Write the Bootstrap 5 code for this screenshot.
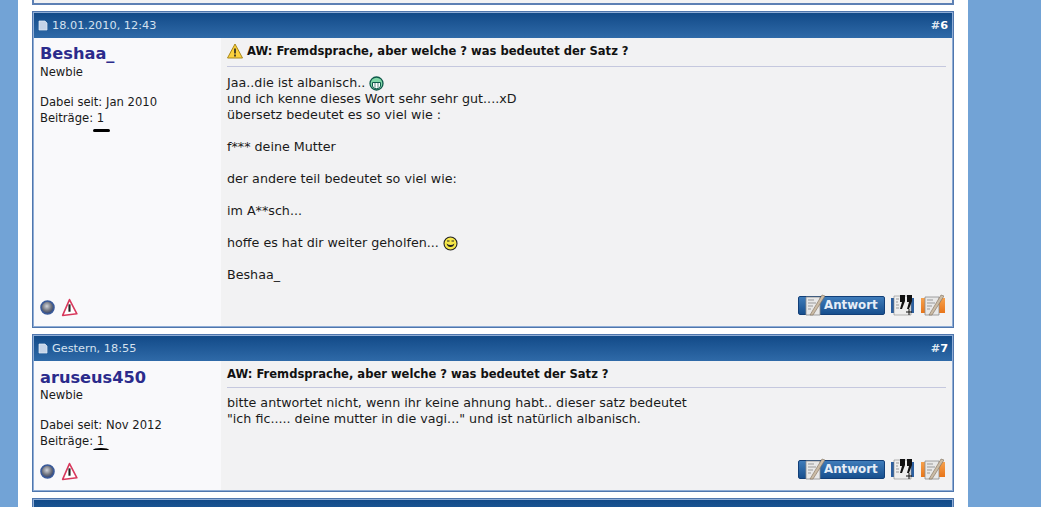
<!DOCTYPE html>
<html lang="de">
<head>
    <meta charset="UTF-8">
    <meta name="viewport" content="width=device-width, initial-scale=1.0">
    <title>Fremdsprache</title>
    <link rel="stylesheet" href="https://cdn.jsdelivr.net/npm/bootstrap@5.3.2/dist/css/bootstrap.min.css">
    <style>
        html, body { height: 507px; overflow: hidden; }
        body {
            background-color: #72a3d6;
            font-family: "DejaVu Sans", Verdana, sans-serif;
            font-size: 11.6px;
            line-height: 16px;
            color: #1a1a1a;
        }
        .page-wrap {
            width: 950px;
            height: 507px;
            margin-left: 18px;
            padding: 0 14px;
            background-color: #fff;
            overflow: hidden;
        }
        .post-stub {
            height: 5px;
            border: 2px solid #5d80b4;
            border-top: 0;
            background-color: #f2f2f3;
            margin-bottom: 6px;
        }
        .post-box {
            border: 1px solid #4f76ad;
            outline: 1px solid #8fadd6;
            outline-offset: -2px;
            margin-bottom: 6px;
        }
        .post-head {
            height: 25px;
            padding: 0 4px;
            margin: 1px 1px 0;
            background: linear-gradient(#124a88, #2f6aa8);
            color: #d5e2f0;
            font-size: 11.3px;
        }
        .post-no { color: #dfe8f2; font-weight: 700; }
        .post-no b { color: #fff; }
        .post-main { margin: 0 1px 1px; }
        .first .post-main { height: 288px; }
        .second .post-main { height: 129px; }
        .post-user {
            width: 187px;
            padding: 5px 7px 9px 6px;
            background-color: #f9f9fb;
        }
        .user-name {
            font-size: 16.2px;
            line-height: 21px;
            font-weight: 700;
            color: #2b2b8c;
        }
        .second .user-name { padding-top: 1px; }
        .second .user-rank { margin-top: -1px; }
        .user-rank { margin-bottom: 14px; }
        .post-count { position: relative; }
        .post-count::after {
            content: "";
            position: absolute;
            left: 53px;
            top: 19px;
            width: 17px;
            height: 3px;
            background-color: #000;
            border-radius: 2px;
        }
        .second .post-count::after {
            top: 15px;
            left: 53px;
            width: 16px;
            height: 4px;
            background-color: transparent;
            border-top: 2px solid #000;
            border-radius: 50% 50% 0 0;
        }
        .user-icons { gap: 6px; }
        .post-body {
            background-color: #f2f2f3;
            padding: 5px 6px 10px 6px;
        }
        .post-title {
            font-weight: 700;
            color: #111;
            font-size: 11.55px;
            border-bottom: 1px solid #c5c8de;
            margin-bottom: 7px;
        }
        .first .post-title { height: 24px; margin-bottom: 8px; }
        .second .post-title { height: 22px; }
        .post-text { font-size: 12.7px; }
        .smile { vertical-align: -4px; }
        .post-actions { gap: 5px; }
        .action-btn {
            position: relative;
            display: block;
            width: 87px;
            height: 19px;
            padding-left: 25px;
            font-size: 11.8px;
            line-height: 17px;
            font-weight: 700;
            color: #e6eef7;
            background: linear-gradient(#3f7cba, #174f8e);
            border: 1px solid #123f78;
            border-radius: 2px;
        }
        .action-btn svg {
            position: absolute;
            left: 6px;
            top: -3px;
        }
    </style>
</head>
<body>
    <svg width="0" height="0" class="d-block">
        <defs>
            <radialGradient id="dot-fill" cx=".45" cy=".4" r=".6">
                <stop offset="0" stop-color="#d2d4da"/>
                <stop offset=".6" stop-color="#6d717c"/>
                <stop offset="1" stop-color="#2c3f70"/>
            </radialGradient>
            <linearGradient id="orange-fill" x1="0" y1="0" x2="0" y2="1">
                <stop offset="0" stop-color="#f6a24e"/>
                <stop offset="1" stop-color="#e8751a"/>
            </linearGradient>
            <symbol id="ic-doc" viewBox="0 0 10 11">
                <path d="M1 1h6l2 2v7H1z" fill="#c4d3e8" stroke="#e4ecf6" stroke-width=".7"/>
            </symbol>
            <symbol id="ic-sheet" viewBox="0 0 20 22">
                <path d="M1 3h14v18H1z" fill="#e8e8e8" stroke="#8a8a8a" stroke-width=".8"/>
                <path d="M3 6h6M3 9h8M3 12h5M3 15h3" stroke="#999" stroke-width="1"/>
                <path d="M5 21 17 1l3 1L8 21z" fill="#cbbca6" stroke="#7f6f5c" stroke-width=".6"/>
            </symbol>
            <symbol id="ic-dot" viewBox="0 0 15 15">
                <circle cx="7.5" cy="7.5" r="6.5" fill="url(#dot-fill)" stroke="#3a5a9a" stroke-width="1.6"/>
            </symbol>
            <symbol id="ic-warn" viewBox="0 0 16 18">
                <path d="M8 1.5 15 15 1.5 16.5z" fill="#fff" stroke="#d8385c" stroke-width="1.5" stroke-linejoin="round"/>
                <path d="M8 6v7" stroke="#222" stroke-width="2"/>
            </symbol>
            <symbol id="ic-quote" viewBox="0 0 25 22">
                <path d="M1 4h23v15H1z" fill="#2c5f9f"/>
                <path d="M4 2h17v19H4z" fill="#eee" stroke="#888" stroke-width=".6"/>
                <path d="M6 5h3M6 8h2M6 11h3M6 14h3" stroke="#999"/>
                <path d="M10 1h5v6l-3 8h-2l2-7h-2zM17 1h5v6l-3 8h-2l2-7h-2z" fill="#111"/>
                <path d="M19 15v6M16 18h6" stroke="#111"/>
            </symbol>
            <symbol id="ic-edit" viewBox="0 0 26 22">
                <path d="M1 4h24v15H1z" fill="url(#orange-fill)"/>
                <use href="#ic-sheet" x="4" width="20" height="22"/>
            </symbol>
        </defs>
    </svg>
    <div class="page-wrap">
        <div class="post-stub"></div>

        <div class="post-box first">
            <div class="post-head d-flex align-items-center justify-content-between">
                <span class="d-flex align-items-center gap-1"><svg width="10" height="11"><use href="#ic-doc"/></svg>18.01.2010, 12:43</span>
                <span class="post-no">#<b>6</b></span>
            </div>
            <div class="post-main d-flex">
                <div class="post-user d-flex flex-column">
                    <div class="user-name">Beshaa_</div>
                    <div class="user-rank">Newbie</div>
                    <div>Dabei seit: Jan 2010</div>
                    <div class="post-count">Beiträge: 1</div>
                    <div class="user-icons mt-auto d-flex align-items-center">
                        <svg width="15" height="15"><use href="#ic-dot"/></svg>
                        <svg width="17" height="19"><use href="#ic-warn"/></svg>
                    </div>
                </div>
                <div class="post-body flex-grow-1 d-flex flex-column">
                    <div class="post-title d-flex gap-1">
                        <svg width="16" height="16" viewBox="0 0 16 16" class="flex-shrink-0"><path d="M8 1 15.5 15H.5z" fill="#fbd13c" stroke="#a8871c" stroke-linejoin="round"/><path d="M8 5.5v5M8 11.5v2" stroke="#222" stroke-width="1.6"/></svg>
                        <span>AW: Fremdsprache, aber welche ? was bedeutet der Satz ?</span>
                    </div>
                    <div class="post-text">
                        Jaa..die ist albanisch..
                        <svg class="smile" width="15" height="15" viewBox="0 0 15 15"><circle cx="7.5" cy="7.5" r="6.5" fill="#7fd6a6" stroke="#0f5a4a" stroke-width="1.3"/><path d="M3.5 6.5h8v3.5a3 2 0 0 1-8 0z" fill="#fff" stroke="#0f5a4a"/><path d="M6 6.5v5M9 6.5v5" stroke="#0f5a4a" stroke-width=".7"/></svg><br>
                        und ich kenne dieses Wort sehr sehr gut....xD<br>
                        übersetz bedeutet es so viel wie :<br><br>
                        f*** deine Mutter<br><br>
                        der andere teil bedeutet so viel wie:<br><br>
                        im A**sch...<br><br>
                        hoffe es hat dir weiter geholfen...
                        <svg class="smile" width="15" height="15" viewBox="0 0 15 15"><circle cx="7.5" cy="7.5" r="6.5" fill="#f6e84a" stroke="#222" stroke-width="1.1"/><path d="M3.5 7.5q4 3 8 0-1 3.5-4 3.5t-4-3.5z" fill="#222"/><path d="M4 5h2.5M8.5 5H11" stroke="#222"/></svg><br><br>
                        Beshaa_
                    </div>
                    <div class="post-actions mt-auto d-flex justify-content-end align-items-center">
                        <span class="action-btn"><svg width="20" height="22"><use href="#ic-sheet"/></svg>Antwort</span>
                        <svg width="25" height="22"><use href="#ic-quote"/></svg>
                        <svg width="26" height="22"><use href="#ic-edit"/></svg>
                    </div>
                </div>
            </div>
        </div>

        <div class="post-box second">
            <div class="post-head d-flex align-items-center justify-content-between">
                <span class="d-flex align-items-center gap-1"><svg width="10" height="11"><use href="#ic-doc"/></svg>Gestern, 18:55</span>
                <span class="post-no">#<b>7</b></span>
            </div>
            <div class="post-main d-flex">
                <div class="post-user d-flex flex-column">
                    <div class="user-name">aruseus450</div>
                    <div class="user-rank">Newbie</div>
                    <div>Dabei seit: Nov 2012</div>
                    <div class="post-count">Beiträge: 1</div>
                    <div class="user-icons mt-auto d-flex align-items-center">
                        <svg width="15" height="15"><use href="#ic-dot"/></svg>
                        <svg width="17" height="19"><use href="#ic-warn"/></svg>
                    </div>
                </div>
                <div class="post-body flex-grow-1 d-flex flex-column">
                    <div class="post-title">AW: Fremdsprache, aber welche ? was bedeutet der Satz ?</div>
                    <div class="post-text">
                        bitte antwortet nicht, wenn ihr keine ahnung habt.. dieser satz bedeutet<br>
                        "ich fic..... deine mutter in die vagi..." und ist natürlich albanisch.
                    </div>
                    <div class="post-actions mt-auto d-flex justify-content-end align-items-center">
                        <span class="action-btn"><svg width="20" height="22"><use href="#ic-sheet"/></svg>Antwort</span>
                        <svg width="25" height="22"><use href="#ic-quote"/></svg>
                        <svg width="26" height="22"><use href="#ic-edit"/></svg>
                    </div>
                </div>
            </div>
        </div>

        <div class="post-box">
            <div class="post-head"></div>
        </div>
    </div>
    <script src="https://cdn.jsdelivr.net/npm/bootstrap@5.3.2/dist/js/bootstrap.bundle.min.js"></script>
</body>
</html>
